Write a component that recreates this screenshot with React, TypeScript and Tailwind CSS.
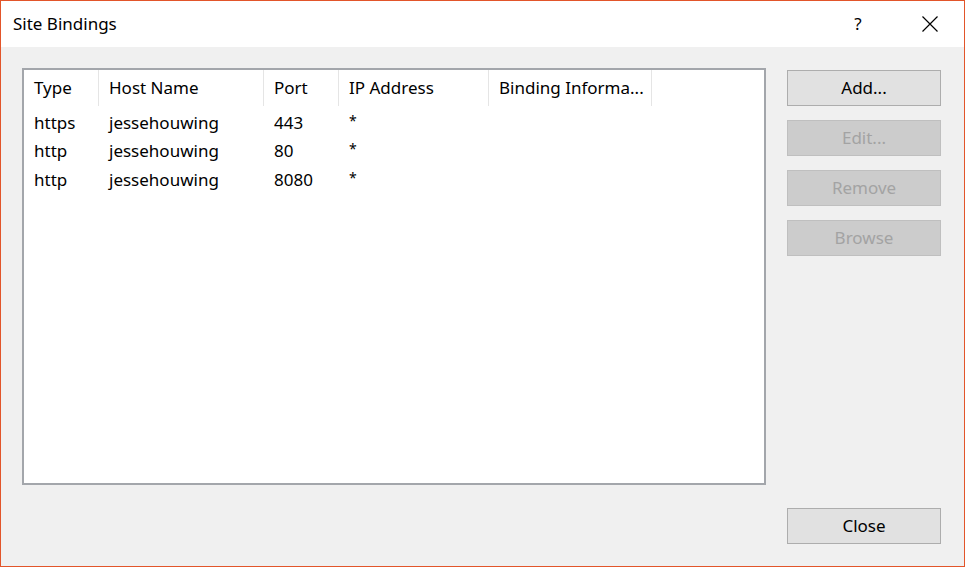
import React from "react";

const cols = [
  { label: "Type", w: 75 },
  { label: "Host Name", w: 165 },
  { label: "Port", w: 75 },
  { label: "IP Address", w: 150 },
  { label: "Binding Informa...", w: 163 },
];

const rows = [
  ["https", "jessehouwing", "443", "*", ""],
  ["http", "jessehouwing", "80", "*", ""],
  ["http", "jessehouwing", "8080", "*", ""],
];

function Btn({ label, disabled }: { label: string; disabled?: boolean }) {
  return (
    <div
      className={
        disabled
          ? "h-[36px] w-[154px] flex items-center justify-center border border-[#bfbfbf] bg-[#cccccc] text-[#a3a3a3]"
          : "h-[36px] w-[154px] flex items-center justify-center border border-[#adadad] bg-[#e1e1e1] text-black"
      }
    >
      {label}
    </div>
  );
}

export default function App() {
  return (
    <div
      className="w-[965px] h-[567px] border border-[#e2552a] bg-[#f0f0f0] flex flex-col text-[17px] text-black"
      style={{ fontFamily: '"Noto Sans", "Segoe UI", sans-serif' }}
    >
      <div className="h-[46px] bg-white flex items-center pl-[12px] shrink-0">
        <div className="flex-1 pb-[1px]">Site Bindings</div>
        <div className="w-[30px] text-center mr-[49px]">?</div>
        <svg width="16" height="16" viewBox="0 0 16 16" className="mr-[26px]">
          <path d="M0.5 0.5 L15.5 15.5 M15.5 0.5 L0.5 15.5" stroke="#000" strokeWidth="1.2" />
        </svg>
      </div>
      <div className="flex-1 flex pt-[21px] pl-[21px] pr-[22px] pb-[21px]">
        <div className="w-[744px] h-[417px] border-2 border-[#a3a6ab] bg-white">
          <div className="flex h-[36px]">
            {cols.map((c) => (
              <div key={c.label} className="border-r border-[#e5e5e5] h-full flex items-center pl-[10px]" style={{ width: c.w }}>
                {c.label}
              </div>
            ))}
          </div>
          <div className="pt-[2px]">
            {rows.map((r, i) => (
              <div key={i} className="flex h-[28.5px] items-center">
                {r.map((v, j) => (
                  <div key={j} className="pl-[10px]" style={{ width: cols[j].w }}>
                    {v === "*" ? <span className="text-[14px] relative top-[-3px]">*</span> : v}
                  </div>
                ))}
              </div>
            ))}
          </div>
        </div>
        <div className="ml-[21px] flex flex-col pt-[2px]">
          <div className="flex flex-col gap-[14px]">
            <Btn label="Add..." />
            <Btn label="Edit..." disabled />
            <Btn label="Remove" disabled />
            <Btn label="Browse" disabled />
          </div>
          <div className="flex-1" />
          <div className="mb-[1px]">
            <Btn label="Close" />
          </div>
        </div>
      </div>
    </div>
  );
}
